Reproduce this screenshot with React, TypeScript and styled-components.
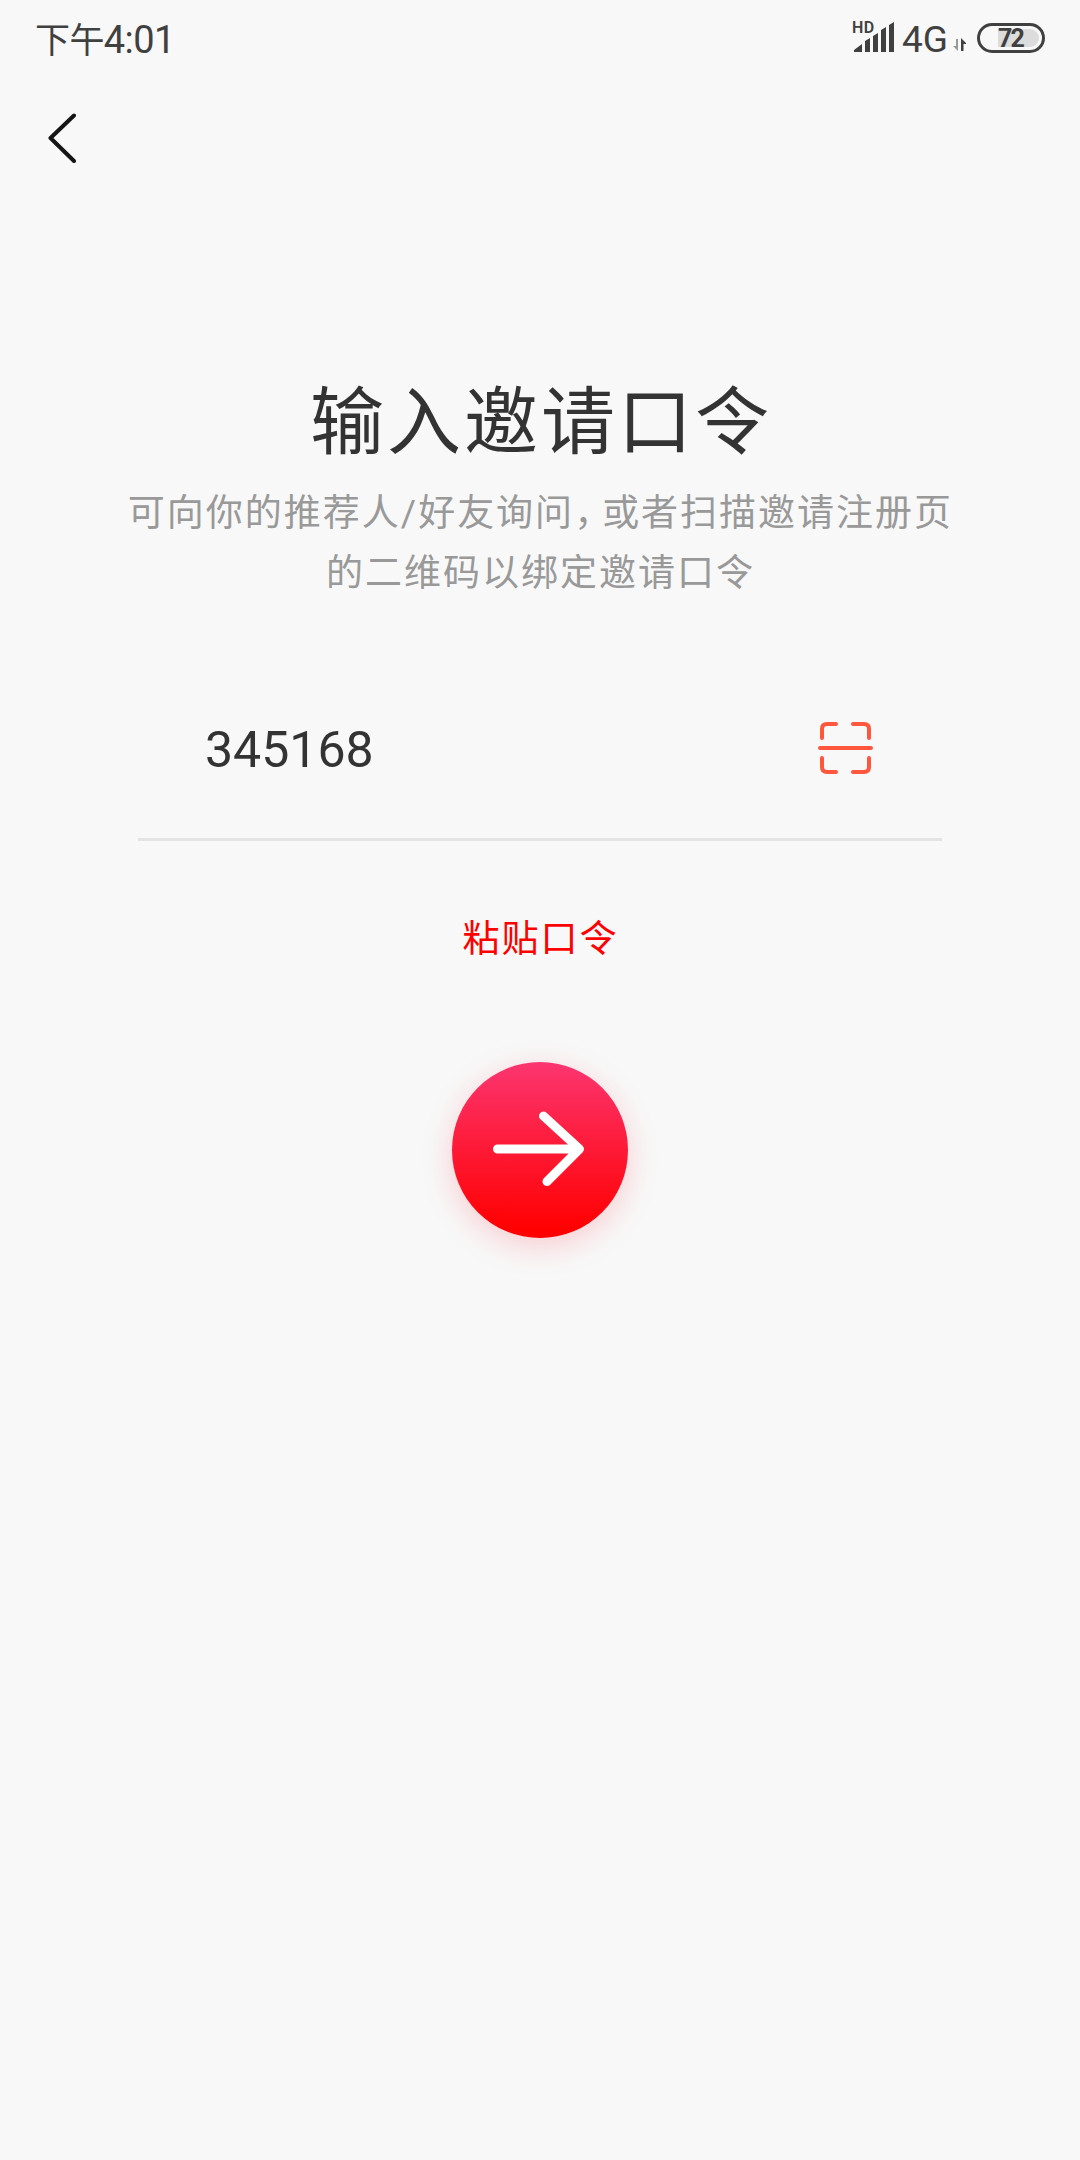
import React from "react";
import styled, { createGlobalStyle } from "styled-components";

const GlobalStyle = createGlobalStyle`
  * { box-sizing: border-box; }
  body {
    margin: 0;
    background: #f8f8f8;
    font-family: Roboto, "Noto Sans CJK SC", sans-serif;
    color: #333;
  }
  button { border: 0; padding: 0; background: none; font: inherit; color: inherit; }
`;

const Screen = styled.div`
  width: 1080px;
  height: 2160px;
  display: flex;
  flex-direction: column;
  background: #f8f8f8;
  overflow: hidden;
`;

const StatusBar = styled.header`
  height: 80px;
  padding: 0 35px;
  display: flex;
  justify-content: space-between;
  align-items: flex-start;
  color: #404040;
`;

const Clock = styled.div`
  display: flex;
  align-items: baseline;
  padding-top: 18px;
  font-size: 38px;
  line-height: 44px;
  letter-spacing: -0.6px;
`;

const Period = styled.span`
  font-size: 35px;
  line-height: 44px;
`;

const StatusIcons = styled.div`
  display: flex;
  align-items: flex-start;
`;

const Signal = styled.div`
  position: relative;
  width: 49px;
  height: 80px;
`;

const HdLabel = styled.span`
  position: absolute;
  left: -1px;
  top: 19px;
  font-size: 16px;
  line-height: 18px;
  font-weight: 600;
  letter-spacing: 0.5px;
`;

const SignalBars = styled.svg`
  display: block;
  width: 49px;
  height: 80px;
`;

const Network = styled.span`
  padding-top: 18px;
  width: 50px;
  font-size: 37px;
  line-height: 44px;
  font-weight: 400;
`;

const DataArrows = styled.svg`
  width: 16px;
  height: 80px;
  margin-right: 9px;
`;

const Battery = styled.div`
  width: 68px;
  height: 30px;
  margin-top: 23px;
  padding: 3px;
  display: flex;
  justify-content: flex-end;
  border: 3px solid #404040;
  border-radius: 15px;
`;

const BatteryLevel = styled.div`
  width: 41px;
  height: 18px;
  border-radius: 0 9px 9px 0;
  background: #dcdcdc;
  font-size: 25px;
  line-height: 19px;
  font-weight: 700;
  letter-spacing: -1.8px;
`;

const NavBar = styled.nav`
  height: 116px;
  padding: 33px 0 0 48px;
`;

const BackButton = styled.button`
  display: block;
  width: 28px;
  height: 50px;
`;

const Icon = styled.svg`
  display: block;
`;

const Content = styled.main`
  display: flex;
  flex-direction: column;
  align-items: center;
`;

const Title = styled.h1`
  margin: 172px 0 0;
  padding-left: 2px;
  font-size: 74px;
  line-height: 110px;
  letter-spacing: 3px;
  font-weight: 400;
  white-space: nowrap;
`;

const Hint = styled.p`
  margin: 6px 0 0;
  padding-left: 1px;
  display: flex;
  flex-direction: column;
  align-items: center;
  font-size: 37px;
  line-height: 60px;
  letter-spacing: 2px;
  color: #999;
  white-space: nowrap;
`;

const HintLine = styled.span`
  display: block;
`;

const Comma = styled.span`
  letter-spacing: -9px;
`;

const CodeField = styled.div`
  width: 804px;
  height: 179px;
  margin-top: 58px;
  padding: 0 68px 0 67px;
  display: flex;
  justify-content: space-between;
  align-items: center;
  border-bottom: 3px solid #e4e4e4;
`;

const CodeValue = styled.span`
  font-size: 50px;
  line-height: 60px;
`;

const ScanButton = styled.button`
  display: block;
  padding-bottom: 4px;
`;

const PasteButton = styled.button`
  margin-top: 69px;
  padding-left: 1px;
  font-size: 37px;
  line-height: 60px;
  letter-spacing: 2px;
  color: #ff0000;
`;

const SubmitButton = styled.button`
  width: 176px;
  height: 176px;
  margin-top: 92px;
  border-radius: 50%;
  background: linear-gradient(#fc3570, #ff0000 96%);
  box-shadow: 0 8px 32px rgba(255, 0, 30, 0.18);
`;

export default function App() {
  return (
    <Screen>
      <GlobalStyle />
      <StatusBar>
        <Clock>
          <Period>下午</Period>4:01
        </Clock>
        <StatusIcons>
          <Signal>
            <HdLabel>HD</HdLabel>
            <SignalBars viewBox="0 0 49 80" fill="#404040">
              <path d="M1 52V50L9 44V52ZM12 52V41L17 38V52ZM20 52V36L25 33V52ZM28 52V30L33 27V52ZM36 52V25L41 22V52Z" />
            </SignalBars>
          </Signal>
          <Network>4G</Network>
          <DataArrows viewBox="0 0 16 80">
            <path d="M6 39V51L1 46H4V39Z" fill="#999" />
            <path d="M9 51V38L14 43V44H11.500V51Z" fill="#404040" />
          </DataArrows>
          <Battery>
            <BatteryLevel>72</BatteryLevel>
          </Battery>
        </StatusIcons>
      </StatusBar>
      <NavBar>
        <BackButton aria-label="返回">
          <Icon width="28" height="50" viewBox="0 0 28 50" fill="none" stroke="#151515" strokeWidth="4" strokeLinecap="round" strokeLinejoin="round">
            <path d="M26 2.500L2.500 25L26 48" />
          </Icon>
        </BackButton>
      </NavBar>
      <Content>
        <Title>输入邀请口令</Title>
        <Hint>
          <HintLine>
            可向你的推荐人/好友询问<Comma>，</Comma>或者扫描邀请注册页
          </HintLine>
          <HintLine>的二维码以绑定邀请口令</HintLine>
        </Hint>
        <CodeField>
          <CodeValue>345168</CodeValue>
          <ScanButton aria-label="扫描">
            <Icon width="56" height="52" viewBox="0 0 56 52" fill="none" stroke="#ff573e" strokeWidth="4" strokeLinecap="round">
              <path d="M4 16V7Q4 2 9 2H18M35 2H46Q51 2 51 7V16M51 36V45Q51 50 46 50H35M18 50H9Q4 50 4 45V36M2 26H53" />
            </Icon>
          </ScanButton>
        </CodeField>
        <PasteButton>粘贴口令</PasteButton>
        <SubmitButton aria-label="下一步">
          <Icon width="176" height="176" viewBox="0 0 176 176" fill="none" stroke="#fff" strokeWidth="9" strokeLinecap="round" strokeLinejoin="round">
            <path d="M45.500 87H127M91.500 54L127.500 87L95 119.500" />
          </Icon>
        </SubmitButton>
      </Content>
    </Screen>
  );
}
